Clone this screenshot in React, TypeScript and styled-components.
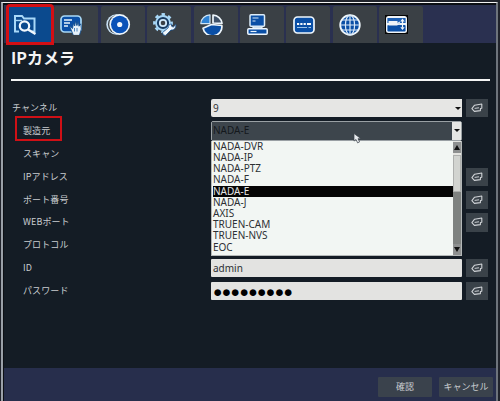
import React from "react";
import styled, { createGlobalStyle } from "styled-components";

const Global = createGlobalStyle`
  html, body { margin: 0; padding: 0; background: #15181f; }
  body { font-family: "Noto Sans CJK JP", "Noto Sans", sans-serif; }
  * { box-sizing: border-box; }
`;

const Shell = styled.div`
  width: 500px;
  height: 401px;
  background: #20232b;
  padding: 2px 2px 0 1px;
  overflow: hidden;
`;
const Frame = styled.div`
  height: 399px;
  border-top: 1px solid #f2f2f2;
  border-left: 2px solid #9aa0a8;
  border-right: 2px solid #6e747c;
  background: #0c0f14;
  padding: 2px 0 0 1px;
  display: flex;
  flex-direction: column;
`;
const TabBar = styled.div`
  height: 38px;
  flex: none;
  background: #2a3050;
  padding: 1px 0 0 4px;
  display: flex;
  gap: 2.4px;
`;
const Tab = styled.div<{ $active?: boolean }>`
  position: relative;
  width: 44px;
  height: 37px;
  padding-right: 9px;
  border-radius: 2px 2px 0 0;
  background: ${(p) => (p.$active ? "#0b4a8e" : "#3a4045")};
  display: flex;
  align-items: center;
  justify-content: center;
  ${(p) => (p.$active ? "outline: 3px solid #d40f14; outline-offset: -1px;" : "")}
`;
const Content = styled.div`
  flex: 1;
  background: #141c25;
  padding: 0 6px 0 7px;
  display: flex;
  flex-direction: column;
`;
const Title = styled.h1`
  margin: 0;
  height: 34px;
  padding-top: 2px;
  font-size: 16px;
  line-height: 24px;
  font-weight: 700;
  color: #f4f4f4;
  border-bottom: 2px solid #f4f4f4;
  box-sizing: content-box;
`;
const Form = styled.div`
  margin-top: 18px;
  display: grid;
  grid-template-columns: 200px 251px 22px;
  grid-auto-rows: 18.2px;
  row-gap: 4.7px;
  column-gap: 0;
`;
const Label = styled.div<{ $top?: boolean }>`
  padding-left: ${(p) => (p.$top ? "1px" : "12px")};
  font-size: 9px;
  line-height: 18px;
  color: #c9ccd0;
  letter-spacing: 0.1px;
  white-space: nowrap;
`;
const Marked = styled.span`
  position: relative;
  &::before {
    content: "";
    position: absolute;
    left: -8px;
    right: -12px;
    top: -8px;
    bottom: -4px;
    border: 2.5px solid #cf1016;
  }
`;
const FieldCell = styled.div`
  position: relative;
  grid-column: 2;
`;
const Input = styled.div<{ $dots?: boolean }>`
  height: 100%;
  background: #e3e3e1;
  border-radius: 1px;
  font-family: "Noto Sans", sans-serif;
  font-size: ${(p) => (p.$dots ? "15.5px" : "10px")};
  line-height: 18px;
  padding-left: 2px;
  letter-spacing: ${(p) => (p.$dots ? "-0.55px" : "0")};
  color: ${(p) => (p.$dots ? "#000" : "#2c2f33")};
  white-space: nowrap;
`;
const Select = styled.div<{ $open?: boolean }>`
  height: ${(p) => (p.$open ? "20px" : "100%")};
  margin-top: ${(p) => (p.$open ? "-1px" : "0")};
  display: flex;
  border-radius: 2px;
  background: #e6e6e4;
  border: ${(p) => (p.$open ? "1px solid #9aa0a4" : "none")};
  position: relative;
`;
const SelectValue = styled.div<{ $open?: boolean }>`
  flex: 1;
  padding-left: ${(p) => (p.$open ? "1px" : "2px")};
  font-family: "Noto Sans", sans-serif;
  font-size: 10px;
  line-height: ${(p) => (p.$open ? "17px" : "18px")};
  color: ${(p) => (p.$open ? "#14181c" : "#33363a")};
  background: ${(p) => (p.$open ? "#3d454c" : "transparent")};
`;
const Caret = styled.div`
  width: 9px;
  display: flex;
  align-items: center;
  justify-content: center;
  background: #e6e6e4;
  &::after {
    content: "";
    border-left: 3px solid transparent;
    border-right: 3px solid transparent;
    border-top: 3px solid #111;
  }
`;
const Pointer = styled.svg`
  position: absolute;
  left: 141px;
  top: 11px;
  z-index: 5;
`;
const ListBox = styled.div`
  position: absolute;
  left: 0;
  right: 0;
  top: 19px;
  height: 115px;
  z-index: 3;
  display: flex;
  background: #f2f6f3;
  border: 1px solid #b4b8b8;
  border-top: 0;
`;
const Items = styled.div`
  flex: 1;
  padding-left: 1px;
`;
const Item = styled.div<{ $selected?: boolean }>`
  height: 11.2px;
  font-family: "Noto Sans", sans-serif;
  font-size: 10px;
  line-height: 11.2px;
  color: ${(p) => (p.$selected ? "#e6e6e6" : "#2d3034")};
  background: ${(p) => (p.$selected ? "#050505" : "transparent")};
  white-space: nowrap;
`;
const Scroll = styled.div`
  width: 8px;
  padding-top: 1px;
  display: flex;
  flex-direction: column;
  background: #e4e4e0;
`;
const ScrollBtn = styled.div<{ $down?: boolean }>`
  height: 11px;
  flex: none;
  background: #8e9090;
  display: flex;
  align-items: center;
  justify-content: center;
  &::after {
    content: "";
    border-left: 3px solid transparent;
    border-right: 3px solid transparent;
    ${(p) => (p.$down ? "border-top: 5px solid #111;" : "border-bottom: 5px solid #111;")}
  }
`;
const Thumb = styled.div`
  height: 37px;
  margin-top: 2px;
  background: #d2d4d0;
  border: 1px solid #aeb0ae;
  flex: none;
`;
const Track = styled.div`
  flex: 1;
  background: #7f8280;
`;
const KeyButton = styled.button`
  grid-column: 3;
  border: 0;
  padding: 0;
  margin-left: 4px;
  width: 22px;
  background: #3a4249;
  display: flex;
  align-items: center;
  justify-content: center;
`;
const Footer = styled.div`
  height: 33px;
  flex: none;
  background: #272e4c;
  display: flex;
  justify-content: flex-end;
  gap: 7px;
  padding: 9px 3px 0 0;
`;
const FooterButton = styled.button`
  width: 54px;
  height: 20px;
  border: 0;
  border-radius: 1px;
  background: #3a424c;
  color: #c9ccd0;
  padding: 0;
  font-family: inherit;
  font-size: 9px;
  line-height: 20px;
`;

const LB = "#a8d8f8";
const BL = "#0a4fa6";

const IconSearch = () => (
  <svg width="25" height="21" viewBox="0 0 25 21" fill="none">
    <path d="M6 17.5H2V2h7l2 2.5h10.5v13h-3" stroke={LB} strokeWidth="2" />
    <path d="M2 6.5h7" stroke={LB} strokeWidth="1.4" />
    <circle cx="11.5" cy="12" r="4.7" stroke="#f2f8fd" strokeWidth="2.2" />
    <path d="M15 15.5l7.5 4.5" stroke="#f2f8fd" strokeWidth="2.4" />
  </svg>
);
const IconHand = () => (
  <svg width="24" height="20" viewBox="0 0 24 20" fill="none">
    <rect x="1" y="1" width="20" height="16" rx="3.5" fill={BL} stroke="#a8d8f6" strokeWidth="1.7" />
    <path d="M4 5h8M4 8h6M4 11h4" stroke="#e8f4fc" strokeWidth="1.4" />
    <path d="M9.5 11l3 2.5 1-5.5 1.2 3 .8-5 1.4 4.6 1.4-4 .7 4.6 1.8-2.4.6 5.2-2 6.4h-6z" fill="#e6f1fa" stroke="#15508f" strokeWidth=".9" strokeLinejoin="round" />
    <path d="M14.5 13v3.5M17 13v3.5" stroke="#3b78b8" strokeWidth=".9" />
  </svg>
);
const IconDisc = () => (
  <svg width="25" height="23" viewBox="0 0 25 23" fill="none">
    <circle cx="10.5" cy="11.5" r="10.2" fill="#c8dff2" />
    <circle cx="11.5" cy="11.5" r="9.6" fill="#3a4045" />
    <circle cx="13.7" cy="11.5" r="10.4" fill="#eef6fc" />
    <circle cx="13.7" cy="11.5" r="8.7" fill="#0a52b8" />
    <circle cx="13.7" cy="11.5" r="2.6" fill="#f4f8fc" />
  </svg>
);
const IconGear = () => (
  <svg width="24" height="23" viewBox="0 0 24 23" fill="none">
    <circle cx="10" cy="10" r="7" fill="#173a60" stroke={LB} strokeWidth="1.8" />
    <circle cx="10" cy="10" r="8.6" stroke={LB} strokeWidth="2.6" strokeDasharray="3.4 3.35" strokeDashoffset="1.7" />
    <circle cx="10" cy="10" r="3.2" fill="#3a4045" stroke="#cfe8fa" strokeWidth="1.8" />
    <path d="M23 11.5l-2.8 2.6-1.8-1 .3-2c-2.2-.2-3.8 1.4-3.4 3.6L9.5 19.6l.8 2.4 2.4.4 5.3-5.4c2.6.4 5-1.6 5-5.3z" fill="#f2f8fc" stroke="#15508f" strokeWidth=".8" strokeLinejoin="round" />
  </svg>
);
const IconPie = () => (
  <svg width="23" height="21" viewBox="0 0 23 21" fill="none">
    <path d="M11.5 10.5L21.8 11.5A9.5 9 0 0 1 3 14.2z" fill={BL} stroke="#eef6fc" strokeWidth="1.7" strokeLinejoin="round" />
    <path d="M13 9V1.2A9.3 9 0 0 1 22 9.4z" fill="#3f5168" stroke="#eef6fc" strokeWidth="1.7" strokeLinejoin="round" />
    <path d="M10 9.6V.8A9.5 9 0 0 0 .8 9.6z" fill="#2e82d4" stroke="#cfe4f5" strokeWidth="1.2" strokeLinejoin="round" />
  </svg>
);
const IconPc = () => (
  <svg width="21" height="21" viewBox="0 0 21 21" fill="none">
    <rect x="3" y=".8" width="14.5" height="11.5" rx="1" fill={BL} stroke="#dcecf8" strokeWidth="1.5" />
    <path d="M5.5 4h6M5.5 7h3" stroke="#cfe6f8" strokeWidth="1.2" />
    <path d="M6 12.5v2h9v-2" fill="#cfe0ee" stroke="#e8f3fb" strokeWidth="1.2" />
    <rect x=".8" y="14.8" width="19.4" height="5.4" rx="1" fill={BL} stroke="#eef6fc" strokeWidth="1.5" />
    <path d="M3.5 17.5h6" stroke="#eaf4fb" strokeWidth="1.2" />
  </svg>
);
const IconKeys = () => (
  <svg width="22" height="18" viewBox="0 0 22 18" fill="none">
    <rect x="1" y="1" width="20" height="16" rx="3.5" fill={BL} stroke="#eef6fc" strokeWidth="1.7" />
    <path d="M4 8h2.2M7.3 8h2.2M10.6 8h2.2M14 8h4" stroke="#f6f9fc" strokeWidth="2.2" />
    <path d="M4 11.5h10M15.5 11.5h2.5" stroke="#9cc4e8" strokeWidth="1" />
  </svg>
);
const IconGlobe = () => (
  <svg width="22" height="22" viewBox="0 0 22 22" fill="none">
    <circle cx="11" cy="11" r="9.8" fill={BL} stroke="#f0f7fc" strokeWidth="1.8" />
    <ellipse cx="11" cy="11" rx="4.6" ry="9.8" stroke="#dbeaf7" strokeWidth="1.2" />
    <path d="M11 1.2v19.6M1.2 11h19.6M2.6 6h16.8M2.6 16h16.8" stroke="#dbeaf7" strokeWidth="1.2" />
  </svg>
);
const IconCam = () => (
  <svg width="23" height="19" viewBox="0 0 23 19" fill="none">
    <rect width="23" height="19" fill="#060606" />
    <rect x="1" y="1" width="21" height="17" rx="2.5" fill="#eef3f7" />
    <rect x="2.4" y="3" width="18.2" height="5" fill="#1c5fb4" />
    <rect x="2.4" y="10" width="18.2" height="6.6" rx="1" fill={BL} />
    <path d="M3.5 6h9v4.5h-9z" fill="#eef3f7" />
    <path d="M12.5 7.5l2.5-1v3.5l-2.5-1z" fill="#cfdfee" />
    <path d="M17.5 3.6l2.2 2.8h-4.4zM17.5 15l2.2-2.8h-4.4z" fill="#f6f9fc" />
    <path d="M17.5 6v6.5" stroke="#f6f9fc" strokeWidth="1.2" />
  </svg>
);
const BackIcon = () => (
  <svg width="12" height="10" viewBox="0 0 12 10" fill="none">
    <path d="M3.6 2.2L10.8 1V5.2L9.4 5.5V7.6L3.4 8.4.9 5.6z" stroke="#cfd2d6" strokeWidth="1.1" strokeLinejoin="round" />
    <path d="M3.6 5.4l4.4-.6" stroke="#cfd2d6" strokeWidth="1" />
  </svg>
);
const CursorIcon = () => (
  <Pointer width="10" height="11" viewBox="0 0 10 11">
    <path d="M1 .5v7.6l2-1.6 1.6 3.4 2-1-1.6-3.2h3z" fill="#e8ebee" stroke="#3a4148" strokeWidth=".7" />
  </Pointer>
);

const icons = [IconSearch, IconHand, IconDisc, IconGear, IconPie, IconPc, IconKeys, IconGlobe, IconCam];
const options = ["NADA-DVR", "NADA-IP", "NADA-PTZ", "NADA-F", "NADA-E", "NADA-J", "AXIS", "TRUEN-CAM", "TRUEN-NVS", "EOC"];

export default function App() {
  return (
    <Shell>
      <Global />
      <Frame>
        <TabBar>
          {icons.map((I, i) => (
            <Tab key={i} $active={i === 0}>
              <I />
            </Tab>
          ))}
        </TabBar>
        <Content>
          <Title>IPカメラ</Title>
          <Form>
            <Label $top>チャンネル</Label>
            <FieldCell>
              <Select>
                <SelectValue>9</SelectValue>
                <Caret />
              </Select>
            </FieldCell>
            <KeyButton><BackIcon /></KeyButton>

            <Label><Marked>製造元</Marked></Label>
            <FieldCell>
              <Select $open>
                <SelectValue $open>NADA-E</SelectValue>
                <Caret />
                <CursorIcon />
              </Select>
              <ListBox>
                <Items>
                  {options.map((o) => (
                    <Item key={o} $selected={o === "NADA-E"}>{o}</Item>
                  ))}
                </Items>
                <Scroll>
                  <ScrollBtn />
                  <Thumb />
                  <Track />
                  <ScrollBtn $down />
                </Scroll>
              </ListBox>
            </FieldCell>
            <div />

            <Label>スキャン</Label>
            <FieldCell />
            <div />

            <Label>IPアドレス</Label>
            <FieldCell />
            <KeyButton><BackIcon /></KeyButton>

            <Label>ポート番号</Label>
            <FieldCell />
            <KeyButton><BackIcon /></KeyButton>

            <Label>WEBポート</Label>
            <FieldCell />
            <KeyButton><BackIcon /></KeyButton>

            <Label>プロトコル</Label>
            <FieldCell />
            <div />

            <Label>ID</Label>
            <FieldCell><Input>admin</Input></FieldCell>
            <KeyButton><BackIcon /></KeyButton>

            <Label>パスワード</Label>
            <FieldCell><Input $dots>●●●●●●●●●</Input></FieldCell>
            <KeyButton><BackIcon /></KeyButton>
          </Form>
        </Content>
        <Footer>
          <FooterButton>確認</FooterButton>
          <FooterButton>キャンセル</FooterButton>
        </Footer>
      </Frame>
    </Shell>
  );
}
